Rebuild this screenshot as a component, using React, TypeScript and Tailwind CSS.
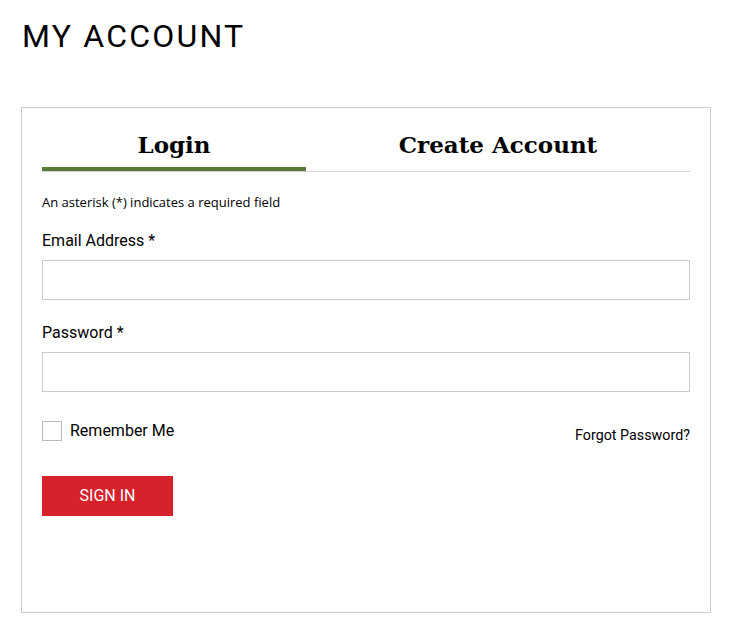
import React from "react";

export default function App() {
  return (
    <div className="min-h-screen bg-white text-black" style={{ fontFamily: "Roboto, 'Liberation Sans', sans-serif" }}>
      <div className="pl-[22px] pr-[21px] pt-[14px]">
        <h1 className="text-[32px] leading-[44px] font-normal tracking-[2.2px] text-black">MY ACCOUNT</h1>
        <div className="mt-[49px] border border-[#cccccc] h-[506px] ml-[-1px] px-[20px] pt-[19px]">
          <div className="flex border-b border-[#d4d4d4] h-[45px]">
            <div className="w-[264px] border-b-4 border-[#577a36] flex justify-center">
              <span className="leading-[36px] font-bold" style={{ fontFamily: "'DejaVu Serif', 'Liberation Serif', serif", fontSize: "23px" }}>Login</span>
            </div>
            <div className="flex-1 flex justify-center">
              <span className="leading-[36px] font-bold" style={{ fontFamily: "'DejaVu Serif', 'Liberation Serif', serif", fontSize: "23px" }}>Create Account</span>
            </div>
          </div>
          <p className="mt-[21px] text-[13px] leading-[18px]" style={{ fontFamily: "'Open Sans', 'Noto Sans', sans-serif" }}>
            An asterisk (*) indicates a required field
          </p>
          <label className="block mt-[19px] text-[16px] leading-[22px]">Email Address *</label>
          <input className="mt-[8px] block w-full h-[40px] border border-[#cccccc] outline-none" />
          <label className="block mt-[22px] text-[16px] leading-[22px]">Password *</label>
          <input type="password" className="mt-[8px] block w-full h-[40px] border border-[#cccccc] outline-none" />
          <div className="mt-[29px] flex items-start justify-between">
            <label className="flex items-start gap-[8px]">
              <span className="w-[20px] h-[20px] border border-[#bbbbbb] bg-white" />
              <span className="text-[16px] leading-[20px]">Remember Me</span>
            </label>
            <a className="mt-[6px] text-[14.3px] leading-[16px] text-black">Forgot Password?</a>
          </div>
          <button className="mt-[33px] w-[131px] h-[40px] bg-[#d7222b] text-white text-[16px] uppercase">Sign In</button>
        </div>
      </div>
    </div>
  );
}
